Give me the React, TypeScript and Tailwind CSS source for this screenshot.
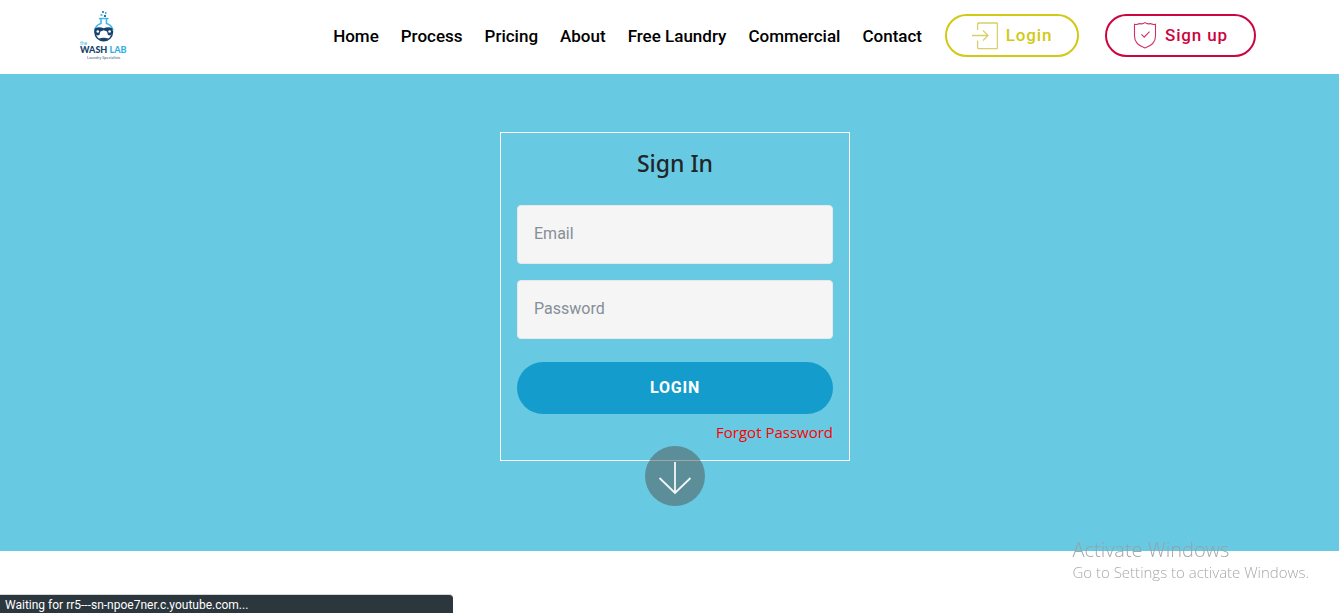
import React from "react";

const navLinks = [
  { label: "Home", href: "#home" },
  { label: "Process", href: "#process" },
  { label: "Pricing", href: "#pricing" },
  { label: "About", href: "#about" },
  { label: "Free Laundry", href: "#free-laundry" },
  { label: "Commercial", href: "#commercial" },
  { label: "Contact", href: "#contact" },
];

const Logo: React.FC = () => (
  <svg width="50" height="54" viewBox="9 9 50 54" role="img" aria-label="The Wash Lab">
    {/* bubbles */}
    <rect x="32" y="11" width="2" height="2" fill="#5d8fb0" />
    <rect x="35" y="12" width="1.5" height="2" fill="#3bb4e5" />
    <rect x="30.5" y="14" width="2" height="2" fill="#5cc3ea" />
    <rect x="34" y="15" width="2" height="2" fill="#2f6f9c" />
    {/* flask */}
    <path d="M29.5 18.5H38M31 19V23.5A9.3 9.3 0 0 0 24.8 29.5M36.5 19V23.5A9.3 9.3 0 0 1 42.8 29.5" fill="none" stroke="#45b8e8" strokeWidth="1.6" strokeLinecap="round" />
    <circle cx="33.7" cy="32" r="8.8" fill="none" stroke="#17426b" strokeWidth="1.4" strokeDasharray="33 23" strokeDashoffset="2.5" />
    <path d="M25 28.5C27.5 26.8 30.5 27 33.7 28.2C36.9 27 39.9 26.8 42.4 28.5L42.8 33L40.5 35.5L38 35L37 31.5L33.7 30.2L30.4 31.5L29.4 35L26.9 35.5L24.6 33Z" fill="#17426b" />
    <circle cx="27.8" cy="31.5" r="1.3" fill="#fff" />
    <circle cx="39.6" cy="31.5" r="1.3" fill="#fff" />
    <path d="M29 38.5Q33.7 36.8 38.4 38.5L36.5 40.3H31Z" fill="#17426b" />
    <text x="10" y="44.5" fontFamily="Lato, sans-serif" fontSize="5" fill="#45b8e8">the</text>
    <text x="10" y="52.5" fontFamily="Lato, sans-serif" fontSize="9" fontWeight="900" fill="#17426b">
      WASH <tspan fill="#31b0e6">LAB</tspan>
    </text>
    <text x="17" y="58.5" fontFamily="Lato, sans-serif" fontSize="4" fill="#3d5d7c">Laundry Specialists</text>
  </svg>
);

const LoginIcon: React.FC = () => (
  <svg width="26" height="28" viewBox="0 0 26 28" fill="none" stroke="#d9cf6a" strokeWidth="1.3" aria-hidden="true">
    <path d="M5.6 8V1.8Q5.6 1 6.4 1H24.6Q25.4 1 25.4 1.8V25.8Q25.4 26.6 24.6 26.6H6.4Q5.6 26.6 5.6 25.8V18.5" />
    <path d="M0 13.5H15.5M11 8.5L16 13.5L11 18.5" />
  </svg>
);

const ShieldIcon: React.FC = () => (
  <svg width="24" height="28" viewBox="0 0 24 28" fill="none" stroke="#cf2f62" strokeWidth="1.1" aria-hidden="true">
    <path d="M1.5 2.2C3.5 2.8 5.5 2.2 7 1.6C9 2.2 10.6 1.6 12 0.6C13.4 1.6 15 2.2 17 1.6C18.5 2.2 20.5 2.8 22.5 2.2V14C22.5 20 18 24 12 26C6 24 1.5 20 1.5 14Z" />
    <path d="M8.5 12.4L11.2 15.2L16.5 9.6" />
  </svg>
);

const App: React.FC = () => {
  return (
    <div className="min-h-screen bg-white font-['Roboto',sans-serif]">
      <header className="flex min-h-[74px] items-center justify-between pb-[3px] pl-[79px] pr-[83px]">
        <a href="#home">
          <Logo />
        </a>
        <div className="flex items-center">
          <nav className="mr-[23px] flex gap-[22px]">
            {navLinks.map((link) => (
              <a key={link.label} href={link.href} className="text-[17px] leading-6 font-medium whitespace-nowrap text-black">
                {link.label}
              </a>
            ))}
          </nav>
          <div className="flex gap-[26px]">
            <a
              href="#login"
              className="flex h-[43px] w-[134px] items-center justify-center gap-2 rounded-full border-2 border-[#d2c816] text-[17px] font-medium tracking-wider text-[#d2c816]"
            >
              <LoginIcon />
              Login
            </a>
            <a
              href="#signup"
              className="flex h-[43px] w-[151px] items-center justify-center gap-2 rounded-full border-2 border-[#cc0540] text-[17px] font-medium tracking-wider text-[#cc0540]"
            >
              <ShieldIcon />
              Sign up
            </a>
          </div>
        </div>
      </header>

      <main className="flex flex-col items-center bg-[#68c9e2] pt-[58px] pb-[45px] pl-[11px]">
        <form className="flex w-[350px] flex-col border border-white p-4 pb-[15px]">
          <h1 className="mb-7 text-center font-['Noto_Sans',sans-serif] text-[23px] leading-7 font-medium text-[#212529]">
            Sign In
          </h1>
          <div className="flex flex-col gap-4">
            <input
              type="email"
              placeholder="Email"
              aria-label="Email"
              className="h-[59px] rounded border border-[#e8e8e8] bg-[#f5f5f5] px-4 pb-[2px] text-base placeholder:text-[#868e96]"
            />
            <input
              type="password"
              placeholder="Password"
              aria-label="Password"
              className="h-[59px] rounded border border-[#e8e8e8] bg-[#f5f5f5] px-4 pb-[2px] text-base placeholder:text-[#868e96]"
            />
          </div>
          <button type="submit" className="mt-[23px] h-[52px] rounded-full bg-[#149dcc] text-base font-bold tracking-wider text-white">
            LOGIN
          </button>
          <a href="#forgot" className="mt-[6px] mb-px self-end font-['Open_Sans',sans-serif] text-[15px] leading-6 text-[#ff0000]">
            Forgot Password
          </a>
        </form>
        <a
          href="#next"
          aria-label="Scroll down"
          className="relative -mt-[15px] flex size-[60px] items-center justify-center rounded-full bg-[#505c5d]/55 pt-1"
        >
          <svg width="34" height="34" viewBox="0 0 34 34" fill="none" stroke="#f3f7f8" strokeWidth="1.8" aria-hidden="true">
            <path d="M17 1V32M1.5 17L17 32L32.5 17" />
          </svg>
        </a>
      </main>

      <div className="pointer-events-none fixed right-[30px] bottom-[31px] font-['Open_Sans',sans-serif] font-light text-[#9b9fa0]/90">
        <p className="text-xl leading-6">Activate Windows</p>
        <p className="text-[15px] leading-5">Go to Settings to activate Windows.</p>
      </div>

      <div className="fixed bottom-0 left-0 h-[19px] w-[453px] rounded-tr border-t border-[#d4d7d9] bg-[#2b363d] pl-[5px] font-['Roboto',sans-serif] text-xs leading-5 text-white">
        Waiting for rr5---sn-npoe7ner.c.youtube.com...
      </div>
    </div>
  );
};

export default App;
